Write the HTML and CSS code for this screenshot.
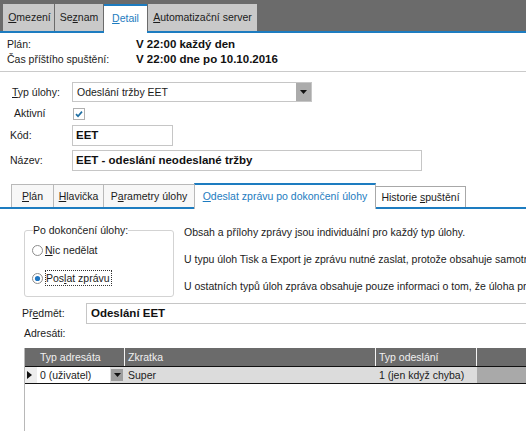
FILE: index.html
```html
<!DOCTYPE html>
<html lang="cs">
<head>
<meta charset="utf-8">
<title>Detail úlohy</title>
<link rel="stylesheet" href="styles.css">
</head>
<body>
<div class="topbar">
  <div class="ttab w1"><span><u>O</u>mezení</span></div>
  <div class="ttab w2"><span>Se<u>z</u>nam</span></div>
  <div class="ttab w3 active"><span><u>D</u>etail</span></div>
  <div class="ttab w4"><span><u>A</u>utomatizační server</span></div>
</div>

<div class="info">
  <div class="irow"><span class="ilabel">Plán:</span><b>V 22:00 každý den</b></div>
  <div class="irow"><span class="ilabel">Čas příštího spuštění:</span><b>V 22:00 dne po 10.10.2016</b></div>
</div>

<div class="form">
  <div class="frow h20">
    <span class="lbl pl2"><u>T</u>yp úlohy:</span>
    <div class="select">
      <span class="seltext">Odeslání tržby EET</span>
      <span class="selbtn"><svg width="7" height="4" viewBox="0 0 7 4"><path d="M0 0h7L3.5 4z" fill="#111"/></svg></span>
    </div>
  </div>
  <div class="frow h15">
    <span class="lbl pl4">Aktivní</span>
    <svg class="check" width="12" height="12" viewBox="0 0 12 12"><rect x=".5" y=".5" width="11" height="11" fill="#fff" stroke="#b0b0b0"/><path d="M3 6.2l2 2 4-4.6" fill="none" stroke="#1f6fa3" stroke-width="1.7"/></svg>
  </div>
  <div class="frow h21">
    <span class="lbl">Kód:</span>
    <div class="input w-kod"><b>EET</b></div>
  </div>
  <div class="frow h21">
    <span class="lbl">Název:</span>
    <div class="input w-nazev"><b>EET - odeslání neodeslané tržby</b></div>
  </div>
</div>

<div class="tabs2">
  <div class="t2 tw1"><span><u>P</u>lán</span></div>
  <div class="t2 tw2"><span><u>H</u>lavička</span></div>
  <div class="t2 tw3"><span>P<u>a</u>rametry úlohy</span></div>
  <div class="t2 tw4 active"><span><u>O</u>deslat zprávu po dokončení úlohy</span></div>
  <div class="t2 tw5 short"><span>Historie <u>s</u>puštění</span></div>
</div>

<div class="content">
  <fieldset class="group">
    <legend>Po dokončení úlohy:</legend>
    <div class="radio first">
      <svg width="11" height="11" viewBox="0 0 11 11"><circle cx="5.5" cy="5.5" r="5" fill="#fff" stroke="#8c8c8c"/></svg>
      <span class="rtext"><u>N</u>ic nedělat</span>
    </div>
    <div class="radio second">
      <svg width="11" height="11" viewBox="0 0 11 11"><circle cx="5.5" cy="5.5" r="5" fill="#fff" stroke="#8c8c8c"/><circle cx="5.5" cy="5.5" r="2.6" fill="#1f76c2"/></svg>
      <span class="rtext focus">Pos<u>l</u>at zprávu</span>
    </div>
  </fieldset>
  <div class="msgs">
    <p>Obsah a přílohy zprávy jsou individuální pro každý typ úlohy.</p>
    <p>U typu úloh Tisk a Export je zprávu nutné zaslat, protože obsahuje samotný výsledek úlohy.</p>
    <p>U ostatních typů úloh zpráva obsahuje pouze informaci o tom, že úloha proběhla.</p>
  </div>
</div>

<div class="subj">
  <span class="slbl">Př<u>e</u>dmět:</span>
  <div class="input w-subj"><b>Odeslání EET</b></div>
</div>
<div class="addr">Adresáti:</div>

<div class="grid">
  <div class="ghead">
    <div class="c rh"></div>
    <div class="c c1">Typ adresáta</div>
    <div class="c c2">Zkratka</div>
    <div class="c c3">Typ odeslání</div>
    <div class="c rest"></div>
  </div>
  <div class="grow">
    <div class="c rh"><svg width="5" height="8" viewBox="0 0 5 8"><path d="M0 0l5 4-5 4z" fill="#111"/></svg></div>
    <div class="c c1 edit">
      <span class="celltext">0 (uživatel)</span>
      <span class="cellbtn"><svg width="7" height="4" viewBox="0 0 7 4"><path d="M0 0h7L3.5 4z" fill="#111"/></svg></span>
    </div>
    <div class="c c2">Super</div>
    <div class="c c3">1 (jen když chyba)</div>
    <div class="c rest"></div>
  </div>
</div>
</body>
</html>
```

FILE: styles.css
```css
* { box-sizing: border-box; }
html, body { margin: 0; }
body {
  width: 526px;
  height: 431px;
  overflow: hidden;
  background: #fff;
  font-family: "Liberation Sans", Arial, sans-serif;
  font-size: 10.5px;
  line-height: 13px;
  color: #1b1b1b;
}
u { text-decoration: underline; text-underline-offset: 1px; }
b { font-weight: bold; font-size: 11.5px; color: #111; }

/* top tab bar */
.topbar {
  height: 33px;
  background: #6b6b6b;
  border-bottom: 2px solid #1d7cc0;
  display: flex;
  align-items: flex-end;
  padding-left: 3px;
  gap: 1px;
}
.ttab {
  flex-shrink: 0;
  height: 27px;
  background: #c9c9c9;
  display: flex;
  align-items: center;
  justify-content: center;
  white-space: nowrap;
  color: #1b1b1b;
}
.ttab.active {
  height: 29px;
  margin-bottom: -2px;
  background: #fff;
  border-top: 2px solid #1d7cc0;
  color: #1d7cc0;
  padding-bottom: 2px;
}
.w1 { width: 51px; padding-left: 2px; }
.w2 { width: 48px; }
.w3 { width: 43px; }
.w4 { width: 109px; }

/* info block */
.info {
  padding: 4px 7px;
  border-bottom: 1px solid #cacaca;
}
.irow { display: flex; align-items: center; height: 15px; white-space: nowrap; }
.ilabel { width: 129px; flex-shrink: 0; }

/* form */
.form {
  display: flex;
  flex-direction: column;
  gap: 4px;
  padding-top: 10px;
  padding-left: 10px;
}
.frow { display: flex; align-items: center; }
.h20 { height: 20px; }
.h15 { height: 15px; }
.h21 { height: 21px; }
.lbl { width: 62px; flex-shrink: 0; white-space: nowrap; }
.pl2 { padding-left: 2px; }
.pl4 { padding-left: 4px; }
.select {
  width: 240px;
  height: 20px;
  border: 1px solid #c6c6c6;
  display: flex;
  align-items: stretch;
}
.seltext { flex: 1; padding-left: 4px; display: flex; align-items: center; }
.selbtn {
  width: 15px;
  background: #ababab;
  display: flex;
  align-items: center;
  justify-content: center;
}
.check { margin-left: 1px; }
.input {
  height: 21px;
  border: 1px solid #c6c6c6;
  display: flex;
  align-items: center;
  padding-left: 3px;
  white-space: nowrap;
  flex-shrink: 0;
}
.w-kod { width: 101px; }
.w-nazev { width: 350px; }

/* lower tabs */
.tabs2 {
  margin-top: 12px;
  height: 26px;
  display: flex;
  align-items: flex-end;
  padding-left: 11px;
  border-bottom: 2px solid #1d7cc0;
}
.t2 {
  flex-shrink: 0;
  height: 23px;
  border: 1px solid #b9b9b9;
  border-bottom: none;
  background: #f7f7f7;
  margin-left: -1px;
  display: flex;
  align-items: center;
  justify-content: center;
  white-space: nowrap;
}
.t2:first-child { margin-left: 0; }
.t2.active {
  height: 26px;
  margin-bottom: -2px;
  background: #fff;
  border-top: 2px solid #1d7cc0;
  color: #1d7cc0;
  padding-bottom: 2px;
}
.t2.short { height: 21px; background: #fff; border-color: #a8a8a8; }
.tw1 { width: 43px; }
.tw2 { width: 51px; }
.tw3 { width: 92px; }
.tw4 { width: 182px; }
.tw5 { width: 91px; }

/* content */
.content {
  display: flex;
  align-items: flex-start;
  margin-top: 15px;
  padding-left: 24px;
}
.group {
  flex-shrink: 0;
  width: 150px;
  margin: 0;
  padding: 0 0 10px 8px;
  border: 1px solid #d3d3d3;
  border-radius: 3px;
}
.group legend {
  padding: 0;
  line-height: 13px;
  white-space: nowrap;
}
.radio {
  display: flex;
  align-items: center;
  gap: 2px;
  height: 16px;
  margin-left: -1px;
  white-space: nowrap;
}
.radio.first { margin-top: 5px; }
.radio.second { margin-top: 12px; }
.rtext.focus {
  border: 1px dotted #333;
  padding: 1px 1px 1px 0;
  line-height: 12px;
}
.msgs {
  flex-shrink: 0;
  margin-left: 10px;
  padding-top: 2px;
  white-space: nowrap;
}
.msgs p { margin: 0 0 14px; line-height: 13px; }
.msgs p:last-child { margin-bottom: 0; }

/* subject */
.subj {
  display: flex;
  align-items: center;
  margin-top: 6px;
  padding-left: 22px;
}
.slbl { width: 64px; flex-shrink: 0; }
.w-subj { width: 470px; padding-left: 4px; }
.addr {
  margin-top: 2px;
  height: 14px;
  padding-left: 24px;
  display: flex;
  align-items: center;
}

/* grid */
.grid {
  margin-top: 8px;
  margin-left: 24px;
  height: 90px;
  border-left: 1px solid #b8b8b8;
}
.ghead, .grow { display: flex; white-space: nowrap; }
.ghead {
  height: 19px;
  background: #6b6b6b;
  color: #f0f0f0;
  border-bottom: 1px solid #111;
}
.grow {
  height: 17px;
  background: #dcdcdc;
  border-bottom: 1px solid #111;
}
.c { display: flex; align-items: center; padding-left: 3px; flex-shrink: 0; }
.rh { width: 12px; padding-left: 2px; }
.c1 { width: 88px; border-right: 1px solid #f4f4f4; }
.c2 { width: 251px; border-right: 1px solid #f4f4f4; }
.c3 { width: 101px; border-right: 1px solid #f4f4f4; }
.rest { flex: 1 1 auto; }
.grow .rh { background: #ededed; }
.grow .c1, .grow .c2, .grow .c3 { border-right-color: #dcdcdc; }
.grow .rest { background: #a9a9a9; }
.edit { padding-left: 0; }
.celltext {
  width: 73px;
  height: 100%;
  background: #fff;
  padding-left: 3px;
  display: flex;
  align-items: center;
}
.cellbtn {
  width: 12px;
  height: 12px;
  margin-left: 1px;
  background: #9e9e9e;
  display: flex;
  align-items: center;
  justify-content: center;
}
```
